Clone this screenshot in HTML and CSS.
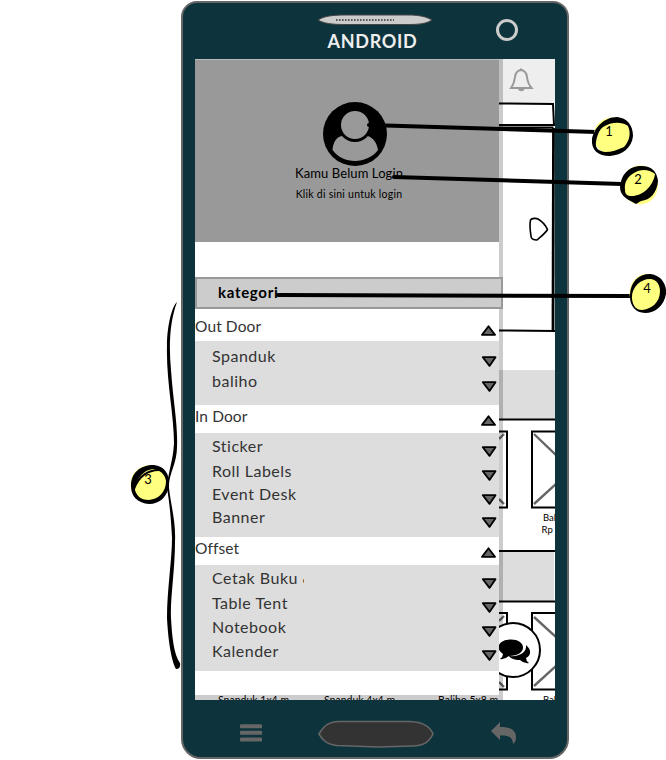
FILE: index.html
```
<!DOCTYPE html>
<html lang="id">
<head>
<meta charset="utf-8">
<title>Android</title>
<link rel="stylesheet" href="styles.css">
</head>
<body>
<main class="stage">
  <section class="phone">
    <header class="phone-top">
      <svg class="speaker" viewBox="0 0 116 12"><path d="M1 6C7 2 16 1 29 1L91 1C103 1 110 3 115 6C109 10 101 10.500 90 10.500L27 10.500C15 10.500 7 9.500 1 6Z" fill="#ccc" stroke="#444"/><path d="M19 6H77" stroke="#333" stroke-width="1.600" stroke-dasharray="1.600 1.400"/></svg>
      <h1>ANDROID</h1>
      <span class="camera"></span>
    </header>
    <div class="screen">
      <aside class="drawer">
        <div class="profile">
          <svg class="avatar" viewBox="0 0 64 64"><circle cx="32" cy="32" r="32"/><path d="M9.500 48C10 40 14 34 20 34C26 39 38 39 44 34C50 35 54 41 55 48C45 62 20 63 9.500 48Z" fill="#999"/><circle cx="32" cy="23" r="15.500" fill="#999" stroke="#000" stroke-width="3"/></svg>
          <strong>Kamu Belum Login</strong>
          <small>Klik di sini untuk login</small>
        </div>
        <div class="category"><span>kategori</span></div>
        <div class="group outdoor">
          <h2><span>Out Door</span><svg class="tri" viewBox="0 0 16 11"><path d="M8.500 1.200L15 9.900H2Z"/></svg></h2>
          <ul>
            <li><span>Spanduk</span><svg class="tri" viewBox="0 0 16 11"><path d="M1.800 1.200H14.500L8.500 9.900Z"/></svg></li>
            <li><span>baliho</span><svg class="tri" viewBox="0 0 16 11"><path d="M1.800 1.200H14.500L8.500 9.900Z"/></svg></li>
          </ul>
        </div>
        <div class="group indoor">
          <h2><span>In Door</span><svg class="tri" viewBox="0 0 16 11"><path d="M8.500 1.200L15 9.900H2Z"/></svg></h2>
          <ul>
            <li><span>Sticker</span><svg class="tri" viewBox="0 0 16 11"><path d="M1.800 1.200H14.500L8.500 9.900Z"/></svg></li>
            <li><span>Roll Labels</span><svg class="tri" viewBox="0 0 16 11"><path d="M1.800 1.200H14.500L8.500 9.900Z"/></svg></li>
            <li><span>Event Desk</span><svg class="tri" viewBox="0 0 16 11"><path d="M1.800 1.200H14.500L8.500 9.900Z"/></svg></li>
            <li><span>Banner</span><svg class="tri" viewBox="0 0 16 11"><path d="M1.800 1.200H14.500L8.500 9.900Z"/></svg></li>
          </ul>
        </div>
        <div class="group offset">
          <h2><span>Offset</span><svg class="tri" viewBox="0 0 16 11"><path d="M8.500 1.200L15 9.900H2Z"/></svg></h2>
          <ul>
            <li><span class="cut">Cetak Buku &amp;</span><svg class="tri" viewBox="0 0 16 11"><path d="M1.800 1.200H14.500L8.500 9.900Z"/></svg></li>
            <li><span>Table Tent</span><svg class="tri" viewBox="0 0 16 11"><path d="M1.800 1.200H14.500L8.500 9.900Z"/></svg></li>
            <li><span>Notebook</span><svg class="tri" viewBox="0 0 16 11"><path d="M1.800 1.200H14.500L8.500 9.900Z"/></svg></li>
            <li><span>Kalender</span><svg class="tri" viewBox="0 0 16 11"><path d="M1.800 1.200H14.500L8.500 9.900Z"/></svg></li>
          </ul>
        </div>
        <div class="products"><span>Spanduk 1x4 m</span><span>Spanduk 4x4 m</span><span>Baliho 5x8 m</span></div>
      </aside>
      <svg class="page" viewBox="499 59 56 641">
        <path d="M499 59H555V103H499Z" fill="#eee"/>
        <path d="M499 370H555V419H499ZM499 552H554V601H499Z" fill="#ddd"/>
        <g fill="none" stroke="#999" stroke-width="2"><path d="M511 88C514 84 514.500 81 515 77C515.500 73 517.500 70.500 521 70C524.500 70.500 526.500 73 527 77C527.500 81 528 84 531.500 88Z"/><path d="M521 70V68.500"/></g>
        <path d="M518 89H524.500C524 92 519 92 518 89Z" fill="#999"/>
        <path d="M499 105H552V124H499Z" fill="#fff"/>
        <g fill="none" stroke="#000" stroke-width="2">
          <path d="M499 103.500L553 104L554 125H499"/>
          <path d="M499 127.500H553.500"/><path d="M553.500 128L553 331" stroke-width="2.800"/><path d="M499 330.500L555 331"/>
          <path d="M530.500 220C532 218 536 218 538 219C543 222 546 226 547.500 229.500C545 234 540 237 537 240C534 240 531 239 531 236C530 230 529.500 225 530.500 220Z" stroke-width="1.600"/>
          <path d="M499 419.500H555M499 551H555M499 601.500H555"/>
          <path d="M499 431.500H507V507.500H499M556 431.500H532V507.500H556M499 613H507V689.500H499M556 613H532V689.500H556"/>
        </g>
        <path d="M499 439L504 434M499 499L504 504M534 434L556 455M534 504L556 484M499 621L504 616M499 682L504 687M534 617L556 637M534 686L556 666" stroke="#666" stroke-width="2.400" fill="none"/>
        <text x="543" y="521">Baliho</text><text x="541.500" y="533">Rp</text><text x="543" y="703">Baliho</text>
        <path d="M499 59H503V700H499Z" fill-opacity=".2"/>
        <circle cx="513" cy="650" r="27" fill="#fff" stroke="#000" stroke-width="2"/>
        <path d="M526 645C532 650 531 656 526 658Q526 661 529 663Q524 664 520 660C514 660 510 658 509 656C520 657 527 652 526 645Z"/>
        <path d="M511 639.500C518 639.500 523 643 523 647.500C523 652 518 656 509 656Q504 660 500 659Q503 657 503 654C499 651 498 649 499 645C501 641 506 639.500 511 639.500Z"/>
      </svg>
    </div>
    <nav class="phone-nav">
      <svg class="menu" viewBox="0 0 22 18"><path d="M1.500 2.200H20.500M1.500 8.700H20.500M1.500 15.500H20.500" stroke="#666" stroke-width="4" stroke-linecap="round"/></svg>
      <svg class="home" viewBox="0 0 116 28"><path d="M1 14C6 5 11 2 21 1.500L92 1.500C104 2 112 6 115 14C111 22 106 25.500 95 26L60 27L19 25.500C9 24 5 21 1 14Z" fill="#333" stroke="#666" stroke-width="1.600"/></svg>
      <svg class="back" viewBox="0 0 26 23"><path d="M0 9L9 0V5C19 5 25 8 25 15Q25 20 22 22C22 15 17 13 9 13.500V18Z" fill="#666"/></svg>
    </nav>
  </section>
  <svg class="notes" viewBox="0 0 666 760">
    <g fill="none" stroke="#000" stroke-width="4" stroke-linecap="round"><path d="M369 125L596 132"/><path d="M394 177L622 184"/><path d="M278 295L632 296"/></g>
    <path d="M177 302C169 324 169 348 171 370C173 400 178 425 177 447C177 464 168 475 169 488C171 506 176 522 175 542C175 570 170 600 171 618C172 637 174 655 180 663Q181 669 176 669C171 660 168 638 167 618C167 590 172 560 172 538C171 520 170 506 167 488C168 471 173 462 174 443C174 415 166 380 167 346C167 326 172 306 177 302Z"/>
    <g fill="#ffff80"><circle cx="612" cy="136" r="18.500"/><ellipse cx="640" cy="185" rx="18" ry="19.500"/><circle cx="149" cy="484" r="18.500"/><ellipse cx="647" cy="293" rx="17.500" ry="19"/></g>
    <path fill-rule="evenodd" d="M592 139C594 128 604 117 617 117C627 118 633 125 633 136C632 148 622 155 610 156C598 156 591 150 592 139ZM596 142C595 148 598 151 605 152C612 152 617 150 624 147C630 140 631 133 628 126C621 121 611 122 603 127C599 130 597 136 596 142Z"/>
    <path fill-rule="evenodd" d="M620 187C621 175 628 167 639 166C651 165 657 171 658 181C657 193 650 200 641 201L636 204C629 200 620 197 620 187ZM625 190C625 194 627 196 632 196C642 196 653 187 655 174C649 169 640 169 634 173C627 177 624 183 625 190Z"/>
    <path fill-rule="evenodd" d="M630 294C631 282 638 274 650 274C661 275 667 284 666 294C664 306 655 313 645 313C635 313 629 305 630 294ZM632 299C633 306 636 310 642 310C651 309 660 303 660 291C660 284 656 279 650 279C640 279 631 288 632 299Z"/>
    <path fill-rule="evenodd" d="M131 486C131 473 140 465 154 465C164 466 170 474 169 485C168 496 160 504 149 504C138 503 131 497 131 486ZM135 490C137 497 142 500 149 500C159 499 166 492 166 481C165 474 160 470 153 469C144 470 138 477 135 486Z"/>
    <path d="M134 489C138 477 148 469 161 470" fill="none" stroke="#000" stroke-width="2"/>
    <g class="num"><text x="609" y="136">1</text><text x="638" y="184">2</text><text x="148" y="484">3</text><text x="647" y="293">4</text></g>
  </svg>
</main>
</body>
</html>
```
FILE: styles.css
```
* { box-sizing: border-box; margin: 0; padding: 0; }
body { background: #fff; font-family: Lato, "Open Sans", sans-serif; color: #333; }
svg { display: block; flex: none; }
.stage { position: relative; width: 666px; height: 760px; overflow: hidden; padding: 1px 0 0 181px; }
.phone { width: 388px; height: 758px; border: 2px solid #666; border-radius: 16px 16px 20px 20px; background: #0d343c; display: flex; flex-direction: column; }
.phone-top { height: 56px; display: grid; grid-template-columns: 134px 116px 1fr; grid-template-rows: 22px 1fr; }
.speaker { grid-column: 2; width: 116px; height: 12px; margin-top: 11px; }
.phone-top h1 { grid-column: 2; grid-row: 2; color: #eee; font-size: 18px; line-height: 32px; letter-spacing: .7px; text-align: center; white-space: nowrap; margin-left: -5px; }
.camera { grid-column: 3; grid-row: 1 / 3; width: 22px; height: 22px; border: 3px solid #ccc; border-radius: 50%; margin: 16px 0 0 63px; }
.screen { width: 360px; height: 641px; margin-left: 12px; display: flex; background: #fff; overflow: hidden; flex: none; }
.drawer { width: 304px; display: flex; flex-direction: column; flex: none; }
.profile { height: 183px; flex: none; background: #999; border-top: 1px solid #bbb; display: flex; flex-direction: column; align-items: center; color: #000; padding: 42px 0 0 16px; }
.avatar { width: 64px; height: 64px; }
.profile strong { font-weight: 400; font-size: 13px; line-height: 15px; white-space: nowrap; letter-spacing: .1px; margin-right: 12px; }
.profile small { font-size: 10.5px; line-height: 14px; letter-spacing: .25px; margin: 6px 12px 0 0; }
.category { position: relative; z-index: 1; width: 308px; height: 32px; margin-top: 35px; flex: none; background: #ccc; border: 2px solid #999; color: #000; font-size: 15px; font-weight: 700; line-height: 27px; padding-left: 21px; letter-spacing: .7px; }
.group { flex: none; font-size: 16px; letter-spacing: .5px; }
.group h2 { font: inherit; font-size: 15.5px; letter-spacing: .1px; height: 28px; line-height: 22px; display: flex; justify-content: space-between; padding-right: 3px; }
.outdoor h2 { height: 32px; line-height: 34px; }
h2 .tri { margin-top: 10px; }
.outdoor h2 .tri { margin-top: 16px; }
.tri { width: 16px; height: 11px; fill: #666; stroke: #000; stroke-width: 1.8px; stroke-linejoin: round; }
.group ul { list-style: none; background: #ddd; height: 104px; padding: 1px 2px 0 17px; }
.outdoor ul { height: 64px; padding-top: 3px; }
.offset ul { height: 106px; }
.group li { height: 24px; line-height: 22px; display: flex; justify-content: space-between; }
.outdoor li, .group li:first-child { height: 25px; line-height: 23px; }
.indoor li:nth-child(n+3) { height: 23px; line-height: 21px; }
.indoor li:nth-child(2) { line-height: 24px; }
.offset li:nth-child(n+2) { line-height: 24px; }
li .tri { margin-top: 11px; }
li:first-child .tri, .outdoor li .tri { margin-top: 12px; }
.cut { width: 92px; overflow: hidden; white-space: nowrap; }
.products { height: 5px; margin-top: 24px; flex: none; background: #ccc; color: #000; overflow: hidden; display: grid; grid-template-columns: 106px 114px 1fr; padding-left: 23px; font-size: 10.5px; line-height: 10px; white-space: nowrap; }
.page { width: 56px; height: 641px; font-size: 9.5px; }
.phone-nav { flex: 1; display: grid; grid-template-columns: 134px 172px 1fr; }
.menu { width: 22px; height: 18px; margin: 24px 0 0 57px; }
.home { width: 116px; height: 28px; margin: 20px 0 0 1px; }
.back { width: 26px; height: 23px; margin: 22px 0 0 2px; }
.notes { position: absolute; inset: 0; width: 666px; height: 760px; z-index: 2; }
.num { font-size: 13px; text-anchor: middle; }
```
